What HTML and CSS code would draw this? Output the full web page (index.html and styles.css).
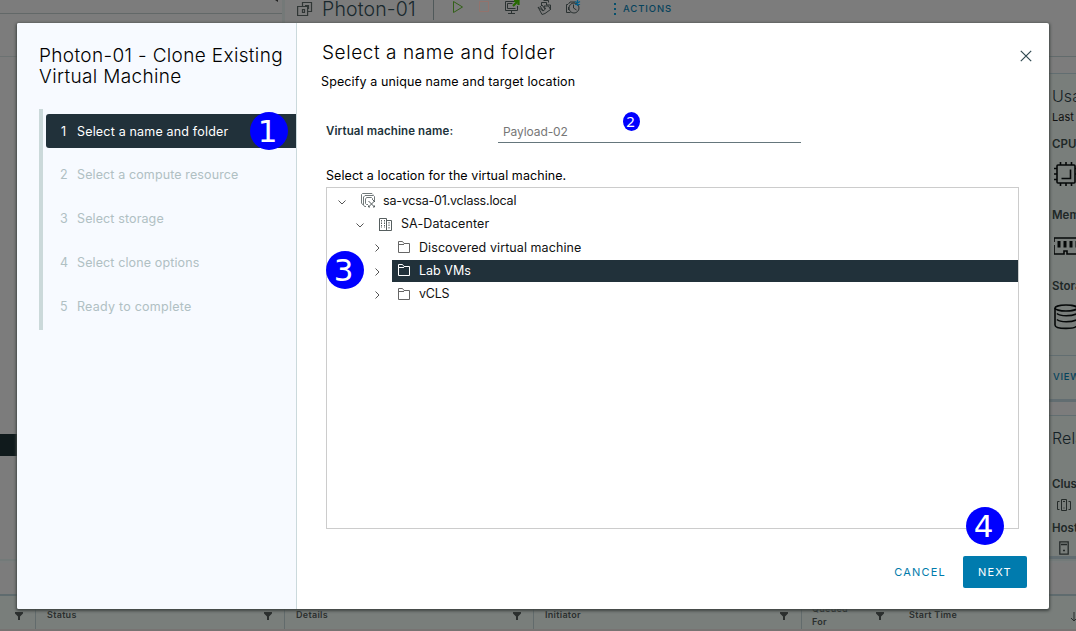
FILE: index.html
```html
<!DOCTYPE html>
<html lang="en">
<head>
<meta charset="utf-8">
<title>Photon-01 - Clone Existing Virtual Machine</title>
<link rel="stylesheet" href="styles.css">
</head>
<body>
<svg class="defs" width="0" height="0">
  <symbol id="folder" viewBox="0 0 14 14"><path d="M1.500 12.500v-11h4l1.500 2h5.500v9zM1.500 4.500H7" fill="none" stroke="currentColor"/></symbol>
  <symbol id="right" viewBox="0 0 8 8"><path d="M2.500.5l3.500 3.500-3.500 3.500" fill="none" stroke="currentColor"/></symbol>
  <symbol id="down" viewBox="0 0 8 8"><path d="M.5 2.500L4 6l3.500-3.500" fill="none" stroke="currentColor"/></symbol>
  <symbol id="filter" viewBox="0 0 8 8"><path d="M0 0h8v1.500L5 4.500V8H3V4.500L0 1.500z" fill="currentColor"/></symbol>
</svg>
<div class="app">
  <div class="upper">
    <aside class="inventory">
      <div class="inventory-top"></div>
      <div class="inventory-tabs"></div>
      <div class="inventory-selected"></div>
      <svg class="corner" width="4" height="3"><path d="M0 0h3v2z" fill="#222"/></svg>
    </aside>
    <section class="object">
      <header class="object-header">
        <svg class="vm-icon" width="16" height="16" viewBox="0 0 16 16" fill="none" stroke="#303635" stroke-width="1.200"><path d="M5.500 5V1.500h9v9H11M.600 5.500h10v9H.600zM8 4.500h3.500V8M5.500 8v3.500H8M5.500 8.500h2v3"/></svg>
        <span class="object-name">Photon-01</span>
        <i class="divider"></i>
        <div class="toolbar">
          <svg width="12" height="14" viewBox="0 0 12 14"><path d="M1.500 1.500v11L10.500 7z" fill="none" stroke="#336018"/></svg>
          <svg width="11" height="12" viewBox="0 0 11 12"><path d="M.5 1.500h9v10h-9z" fill="none" stroke="#92736d"/></svg>
          <svg width="16" height="15" viewBox="0 0 16 15" fill="none" stroke="#2b3232"><path d="M10 1.500H1.500v9h12V6M3.500 3.500h5M3.500 3.500v5h8M7.500 11v2.500M4 13.500h7"/><path d="M9 6l4-4M10 1h4.500v4" stroke="#256800" stroke-width="2.200"/></svg>
          <svg width="16" height="16" viewBox="0 0 16 16" fill="none" stroke="#2b3232"><path d="M4.500 6V2.500h5V5h4v5M6.500.500h5v2M1 7l4 7.500 3-1 5.500-4-2-3.500H7L8.500 9 6 11zM3 6l3 4.500M5 5l3 4"/></svg>
          <svg width="17" height="16" viewBox="0 0 17 16" fill="none" stroke="#2b3232"><path d="M3 4.500H1.500v8h4M3.500 4l1.500-2h5M3.500 7v3"/><circle cx="9" cy="8" r="5"/><path d="M8.500 4.500V8l3 2"/><path d="M12.500 0v6M10 1.500l5 3M10 4.500l5-3" stroke="#08608a" stroke-width="1.300"/></svg>
        </div>
        <i class="dots"></i>
        <span class="actions">ACTIONS</span>
      </header>
      <div class="cards">
        <div class="card usage">
          <h3>Usage</h3>
          <p>Last updated</p>
          <h4 class="first">CPU</h4>
          <svg width="24" height="24" viewBox="0 0 24 24" fill="none" stroke="#050808" stroke-width="1.600"><rect x="3" y="3" width="18" height="18" rx="1"/><path d="M16.500 7.500v9h-9M6.500 3V0M12 3V0M17.500 3V0M6.500 24v-3M12 24v-3M17.500 24v-3M0 6.500h3M0 12h3M0 17.500h3M21 6.500h3M21 12h3"/></svg>
          <h4>Memory</h4>
          <svg width="26" height="20" viewBox="0 0 26 20" fill="none" stroke="#050808" stroke-width="1.600"><path d="M0 6V2h26M0 9v9h10v-3h3v3h13"/><path d="M5 5v6.500M11 5v6.500M17 5v6.500M23 5v6.500" stroke-width="3"/></svg>
          <h4>Storage</h4>
          <svg width="26" height="26" viewBox="0 0 26 26" fill="none" stroke="#050808" stroke-width="1.600"><ellipse cx="12" cy="4" rx="11" ry="3"/><path d="M1 4v17c0 4.500 22 4.500 22 0V4M3 9.500c3 3 15 3 20 0M3 15.500c3 3 15 3 20 0"/></svg>
          <div class="view">VIEW STATS</div>
        </div>
        <div class="card related">
          <h3>Related Objects</h3>
          <h4>Cluster</h4>
          <svg class="cluster" width="14" height="14" viewBox="0 0 14 14" fill="none" stroke="#242a29"><path d="M4.500 1.500h5v11h-5zM2.500 3.500H.500v8h2M11.500 3.500h2v8h-2M6 3.500h2M6.500 10h1"/></svg>
          <h4>Host</h4>
          <svg class="host" width="10" height="14" viewBox="0 0 10 14" fill="none" stroke="#242a29"><path d="M.8.800h8.400v12.400H.800zM2 3.500h6M4 9.500h2" stroke-width="1.300"/></svg>
        </div>
      </div>
    </section>
  </div>
  <div class="tasks">
    <div class="tasks-title"></div>
    <div class="tasks-head">
      <div class="cell c0"><svg><use href="#filter"/></svg></div>
      <div class="cell c1"><span>Status</span><svg><use href="#filter"/></svg></div>
      <div class="cell c2"><span>Details</span><svg><use href="#filter"/></svg></div>
      <div class="cell c3"><span>Initiator</span><svg><use href="#filter"/></svg></div>
      <div class="cell c4"><span>Queued<br>For</span><svg><use href="#filter"/></svg></div>
      <div class="cell c5"><span>Start Time</span><svg viewBox="0 0 8 10"><path d="M4 0v9M1 6l3 3 3-3" fill="none" stroke="#2b2f2e"/></svg></div>
    </div>
    <div class="tasks-foot"></div>
  </div>
</div>

<div class="modal">
  <nav class="steps">
    <h1><span class="t1">Photon-01 - Clone Existing</span><br><span class="t2">Virtual Machine</span></h1>
    <ol>
      <li class="active"><b>1</b><span class="s1">Select a name and folder</span></li>
      <li><b>2</b><span class="s2">Select a compute resource</span></li>
      <li><b>3</b><span class="s3">Select storage</span></li>
      <li><b>4</b><span class="s4">Select clone options</span></li>
      <li><b>5</b><span class="s5">Ready to complete</span></li>
    </ol>
  </nav>
  <main class="page">
    <div class="page-head">
      <h2>Select a name and folder</h2>
      <svg width="12" height="12" viewBox="0 0 12 12"><path d="M.8.800l10.400 10.400M11.200.800L.8 11.200" stroke="#314a52" stroke-width="1.200"/></svg>
    </div>
    <p class="lead">Specify a unique name and target location</p>
    <div class="field"><label>Virtual machine name:</label><div class="input">Payload-02</div></div>
    <p class="loc">Select a location for the virtual machine.</p>
    <div class="tree">
      <div class="node l0"><svg class="car"><use href="#down"/></svg>
        <svg class="ico" width="15" height="15" viewBox="0 0 15 15" fill="none" stroke="#71797a"><path d="M3 11.500H1.500L.500 10V1.500l1-1H11l1 1M5 13.500H3.500L2.500 12V4L4 2.500h8.500l1 1V7M7 11.500H5.500l-1-1V6l1-1.500h5l1 1V7"/><path d="M7.500 8l6 6M13.500 8l-6 6M12 7.500h1.500V9M7.500 12.500V14H9M12 14h1.500v-1.500" stroke="#50595a"/></svg>
        <span class="n4">sa-vcsa-01.vclass.local</span></div>
      <div class="node l1"><svg class="car"><use href="#down"/></svg>
        <svg class="ico" width="13" height="14" viewBox="0 0 13 14" fill="none" stroke="#565e5f"><path d="M.500 13.500V1.500h7v12M8 3.500h4.500v10H0"/><path d="M2.500 3v8M5.500 3v8M10 5v7" stroke-dasharray="1.500 1"/></svg>
        <span class="n5">SA-Datacenter</span></div>
      <div class="node l2"><svg class="car"><use href="#right"/></svg><div class="row"><svg class="ico"><use href="#folder"/></svg><span class="n1">Discovered virtual machine</span></div></div>
      <div class="node l2 selected"><svg class="car"><use href="#right"/></svg><div class="row"><svg class="ico"><use href="#folder"/></svg><span class="n2">Lab VMs</span></div></div>
      <div class="node l2"><svg class="car"><use href="#right"/></svg><div class="row"><svg class="ico"><use href="#folder"/></svg><span class="n3">vCLS</span></div></div>
    </div>
    <footer><span class="cancel">CANCEL</span><span class="next">NEXT</span></footer>
  </main>
</div>
<div class="badge b1">1</div>
<div class="badge b2">2</div>
<div class="badge b3">3</div>
<div class="badge b4">4</div>
</body>
</html>
```
FILE: styles.css
```css
* { box-sizing: border-box; }
body { margin: 0; width: 1076px; height: 631px; overflow: hidden; position: relative; background: #7c7c7c; font-family: Inter, "Open Sans", sans-serif; font-size: 12.500px; color: #111; }
.defs { position: absolute; }
svg { display: block; flex: none; }
h1, h2, h3, h4, p, ol { margin: 0; padding: 0; font-weight: 400; }
span { white-space: nowrap; }

/* Dimmed application behind the dialog */
.app { height: 631px; display: flex; flex-direction: column; overflow: hidden; }
.upper { height: 561px; display: flex; border-bottom: 2px solid #737a79; }
.inventory { width: 285px; border-right: 3px solid #747978; position: relative; }
.inventory-top { height: 14px; border-bottom: 1px solid #626868; }
.inventory-tabs { height: 43px; border-bottom: 1px solid #6c7272; }
.inventory-selected { height: 22px; margin-top: 377px; background: #101a1c; }
.corner { position: absolute; left: 275px; top: 0; }
.object { flex: 1; display: flex; flex-direction: column; }
.object-header { height: 59px; padding-left: 12px; display: flex; align-items: flex-start; border-bottom: 1px solid #626b6c; }
.vm-icon { margin: 1px 9px 0 0; }
.object-name { width: 111px; font-size: 19.500px; font-weight: 300; line-height: 18px; letter-spacing: 0.150px; color: #18282d; }
.divider { width: 1px; height: 20px; background: #50595a; }
.toolbar { display: flex; width: 180px; padding-left: 18px; gap: 15px; }
.toolbar svg:nth-child(3) { margin-left: -1px; }
.toolbar svg:nth-child(4) { margin-left: 2px; }
.toolbar svg:nth-child(5) { margin-left: -3px; }
.dots { width: 2px; height: 12px; margin-top: 3px; background: repeating-linear-gradient(#06506d 0 2px, transparent 2px 5px); }
.actions { margin-left: 7px; line-height: 17px; font-size: 9.500px; font-weight: 500; letter-spacing: 0.900px; color: #06435c; }
.cards { width: 40px; margin-left: auto; padding-top: 16px; }
.card { background: #797e7b; padding-left: 16px; width: 53px; overflow: hidden; border-top: 1px solid #626e71; border-bottom: 3px solid #626d71; color: #202827; }
.usage { height: 329px; }
.related { height: 144px; margin-top: 13px; }
.card h3 { font-size: 16px; font-weight: 300; line-height: 20px; margin-top: 12px; letter-spacing: .1px; white-space: nowrap; color: #152126; }
.card p { font-size: 11px; line-height: 20px; margin-top: 1px; color: #111; white-space: nowrap; }
.card h4 { height: 16px; line-height: 16px; font-size: 11.500px; font-weight: 600; white-space: nowrap; }
.card svg { margin-left: 2px; }
.usage h4 { margin: 22px 0 13px; }
.usage h4:nth-of-type(1) { margin: 9px 0 10px; }
.usage h4:nth-of-type(2) { margin: 21px 0 13px; }
.usage h4:nth-of-type(3) { margin: 22px 0 10px; }
.view { margin: 25px 0 0 -16px; padding: 15px 0 0 17px; width: 70px; border-top: 1px solid #626e71; font-size: 9.500px; font-weight: 500; letter-spacing: .7px; white-space: nowrap; color: #06435c; }
.related h4 { margin: 28px 0 6px; }
.card .cluster { margin-left: 5px; }
.related h4 + svg + h4 { margin: 8px 0 5px; }
.card .host { margin-left: 7px; }
.tasks-title { height: 35px; border-top: 2px solid #7a7d7d; border-bottom: 2px solid #5f6b6e; }
.tasks-head { height: 33px; display: flex; background: #797e7b; font-size: 9px; font-weight: 600; color: #2b2f2e; }
.cell { display: flex; justify-content: space-between; align-items: flex-start; padding: 14px 12px 0 11px; border-right: 1px solid #626b6c; height: 33px; line-height: 10px; letter-spacing: .3px; }
.cell svg { width: 8px; height: 8px; margin-top: 2px; }
.c0 { width: 36px; padding-left: 15px; }
.c1, .c2 { width: 249px; }
.c3 { margin-right: -7px; width: 268px; padding-right: 13px; }
.c4 { margin-left: 17px; width: 73px; line-height: 13px; border: 0; padding: 6px 1px 0 0; height: auto; }
.c4 svg { margin-top: 10px; }
.c5 { margin-left: 24px; border: 0; flex: 1; padding: 14px 0 0; }
.c5 svg { width: 8px; height: 10px; margin-right: -2px; }
.tasks-foot { height: 2px; background: #777372; }

/* Dialog */
.modal { position: absolute; left: 17px; top: 23px; width: 1032px; height: 586px; display: flex; background: #fff; border-radius: 2px; overflow: hidden; box-shadow: 0 1px 3px 1px #3f4543; }
.steps { width: 280px; background: #f7faff; border-right: 1px solid #cbd9dc; padding: 22px 0 0 22px; }
h1 { font-size: 19px; font-weight: 300; line-height: 21px; color: #000; height: 64px; }
.t1 { letter-spacing: .35px; }
.t2 { letter-spacing: .35px; }
ol { list-style: none; height: 221px; border-left: 4px solid #cbd9da; padding: 5px 0 0 3px; display: flex; flex-direction: column; gap: 10px; }
li { height: 34px; display: flex; align-items: center; padding-left: 14px; color: #b0c0c3; letter-spacing: .12px; }
li b { width: 17px; font-weight: 400; }
li.active { background: #21313a; color: #fff; border-radius: 3px 0 0 3px; height: 34px; margin-bottom: -1px; }
li.active b { padding-left: 1px; }
.s1 { letter-spacing: .18px; }
.s5 { letter-spacing: .24px; }
.page { flex: 1; display: flex; flex-direction: column; }
.page-head { display: flex; justify-content: space-between; padding: 18px 17px 0 25px; height: 49px; }
.page-head svg { margin-top: 9px; }
h2 { font-size: 19px; font-weight: 300; line-height: 24px; letter-spacing: .57px; color: #000; }
.lead { margin-left: 24px; line-height: 20px; height: 20px; white-space: nowrap; color: #000; letter-spacing: .12px; }
.field { display: flex; height: 32px; margin: 19px 0 0 29px; }
label { width: 172px; font-size: 11.500px; font-weight: 600; line-height: 41px; color: #21333b; white-space: nowrap; letter-spacing: .12px; }
.input { width: 303px; height: 32px; padding-left: 5px; border-bottom: 1px solid #65767c; font-size: 12px; line-height: 41px; font-weight: 400; color: #777; letter-spacing: -.1px; }
.loc { margin: 22px 0 0 29px; height: 22px; line-height: 22px; color: #000; white-space: nowrap; letter-spacing: .07px; }
.tree { margin-left: 29px; width: 693px; height: 342px; border: 1px solid #ccc; padding: 1px 0 0; }
.node { height: 23.300px; display: flex; align-items: center; color: #111; }
.l0 { padding-left: 11px; }
.l1 { padding-left: 29px; }
.l2 { padding-left: 46px; }
.car { width: 8px; height: 8px; margin-top: 2px; color: #555; }
.l0 .ico { margin: 0 7px 0 15px; }
.l1 .ico { margin: 0 9px 0 15px; }
.row { flex: 1; height: 22px; margin-left: 11px; padding-left: 5px; display: flex; align-items: center; }
.row .ico { width: 14px; height: 14px; margin-right: 8px; color: #666; }
.selected .row { background: #21313a; color: #fff; margin-top: 1px; padding-bottom: 2px; }
.selected .ico { color: #fff; }
.n1 { letter-spacing: .08px; }
.n3 { letter-spacing: -.25px; }
.n4 { letter-spacing: -.2px; }
.n5 { letter-spacing: .1px; }
footer { display: flex; justify-content: flex-end; align-items: center; height: 32px; margin: 27px 22px 0 0; font-size: 11px; letter-spacing: 1.200px; font-weight: 400; }
.cancel { color: #007bab; margin-right: 17px; }
.next { width: 64px; height: 32px; line-height: 32px; padding-left: 15px; background: #007bae; color: #fff; border-radius: 2px; }

/* Numbered callouts */
.badge { position: absolute; width: 38px; height: 38px; border-radius: 50%; background: #00f; color: #fff; font: 31px/38px "DejaVu Sans", sans-serif; text-align: center; }
.b1 { left: 250px; top: 112px; padding-right: 3px; }
.b2 { left: 623px; top: 112px; width: 17px; height: 19px; font: 15px/19px "Noto Sans", sans-serif; padding-right: 2px; }
.b3 { left: 326px; top: 251px; padding-right: 3px; }
.b4 { left: 966px; top: 507px; padding-right: 3px; }
```
